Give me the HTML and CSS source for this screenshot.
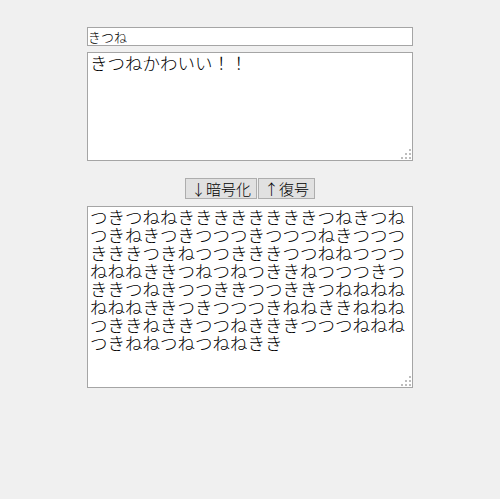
FILE: index.html
```html
<!DOCTYPE html>
<html lang="ja">
<head>
    <meta charset="UTF-8">
    <title>きつね暗号</title>
    <link rel="stylesheet" href="styles.css">
</head>
<body>
    <div class="page">
        <input type="text" class="key" value="きつね">

        <div class="area-wrap">
            <textarea class="plain">きつねかわいい！！</textarea>
            <svg class="grip" width="10" height="10" viewBox="0 0 10 10">
                <rect x="8" y="0" width="2" height="2"/>
                <rect x="4" y="4" width="2" height="2"/>
                <rect x="8" y="4" width="2" height="2"/>
                <rect x="0" y="8" width="2" height="2"/>
                <rect x="4" y="8" width="2" height="2"/>
                <rect x="8" y="8" width="2" height="2"/>
            </svg>
        </div>

        <div class="controls">
            <button class="btn">↓暗号化</button>
            <button class="btn">↑復号</button>
        </div>

        <div class="area-wrap">
            <textarea class="cipher">つきつねねききききききききつねきつねつきねきつきつつつきつつつねきつつつきききつきねつつきききつつねねつつつねねねききつねつねつききねつつつきつききつねきつつききつつききつねねねねねねねききつきつつつきねねききねねねつききねききつつねきききつつつねねねつきねねつねつねねきき</textarea>
            <svg class="grip" width="10" height="10" viewBox="0 0 10 10">
                <rect x="8" y="0" width="2" height="2"/>
                <rect x="4" y="4" width="2" height="2"/>
                <rect x="8" y="4" width="2" height="2"/>
                <rect x="0" y="8" width="2" height="2"/>
                <rect x="4" y="8" width="2" height="2"/>
                <rect x="8" y="8" width="2" height="2"/>
            </svg>
        </div>
    </div>
</body>
</html>
```

FILE: styles.css
```css
body {
    margin: 0;
    background: #f0f0f0;
    font-family: "Noto Sans CJK JP", "DejaVu Sans", sans-serif;
    color: #000;
}

.page {
    width: 326px;
    margin: 0 auto;
    padding-top: 27px;
}

.key {
    display: block;
    box-sizing: border-box;
    width: 326px;
    height: 19px;
    margin: 0 0 6px 0;
    padding: 0 1px 0 0;
    border: 1px solid #a5a5a5;
    background: #fff;
    font-family: "Noto Sans CJK JP", sans-serif;
    font-size: 13px;
    font-weight: 300;
    line-height: 17px;
    outline: none;
}

.area-wrap {
    position: relative;
}

textarea {
    display: block;
    box-sizing: border-box;
    width: 326px;
    margin: 0;
    padding: 1px 2px;
    border: 1px solid #a5a5a5;
    background: #fff;
    font-family: "Noto Sans CJK JP", sans-serif;
    font-size: 17.5px;
    font-weight: 300;
    line-height: 18px;
    resize: none;
    overflow: hidden;
    outline: none;
}

.plain {
    height: 109px;
}

.cipher {
    height: 182px;
}

.grip {
    position: absolute;
    right: 2px;
    bottom: 2px;
    fill: #bdbdbd;
}

.controls {
    display: flex;
    justify-content: center;
    gap: 1px;
    margin: 17px 0 7px 0;
}

.btn {
    box-sizing: border-box;
    height: 21px;
    padding: 0 5px;
    border: 1px solid #adadad;
    background: #e1e1e1;
    font-family: "Noto Sans CJK JP", sans-serif;
    font-size: 15px;
    font-weight: 300;
    line-height: 19px;
    color: #000;
    border-radius: 0;
}
```
